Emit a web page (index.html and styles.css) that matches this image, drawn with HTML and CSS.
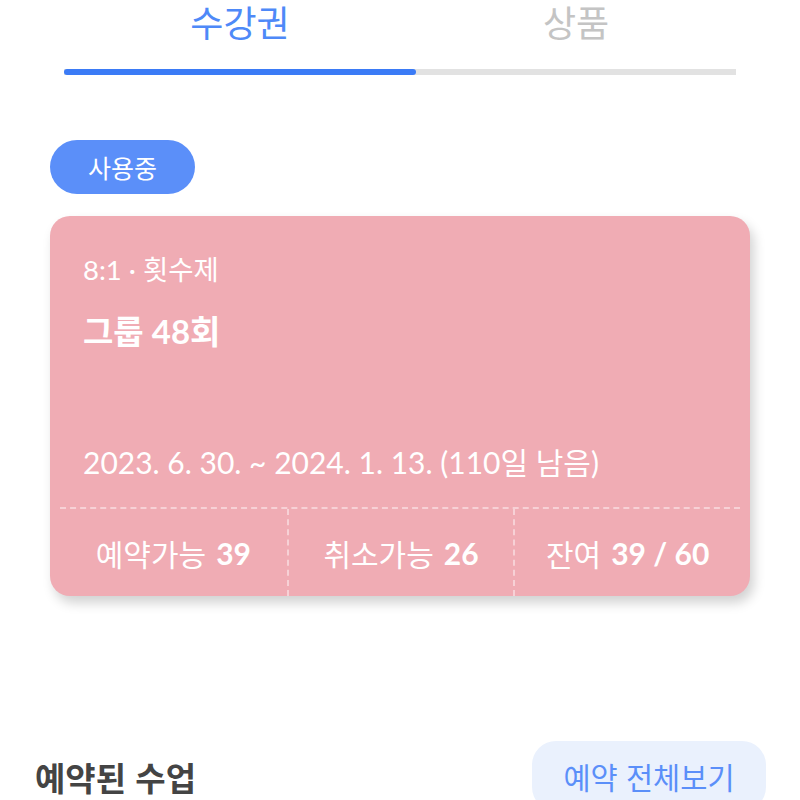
FILE: index.html
```html
<!DOCTYPE html>
<html lang="ko">
<head>
<meta charset="utf-8">
<link rel="stylesheet" href="styles.css">
</head>
<body>
<div class="page">
  <div class="tabs">
    <div class="tab active">수강권</div>
    <div class="tab">상품</div>
  </div>
  <div class="bar"><div class="bar-fill"></div></div>

  <div class="badge">사용중</div>

  <div class="card">
    <div class="card-info">
      <div class="card-meta">8:1 · 횟수제</div>
      <div class="card-title">그룹 48회</div>
      <div class="card-date">2023. 6. 30. ~ 2024. 1. 13. (110일 남음)</div>
    </div>
    <div class="stats">
      <div class="stat">예약가능 <b>39</b></div>
      <div class="stat">취소가능 <b>26</b></div>
      <div class="stat">잔여 <b>39 / 60</b></div>
    </div>
  </div>

  <div class="section-head">
    <div class="section-title">예약된 수업</div>
    <div class="section-btn">예약 전체보기</div>
  </div>
</div>
</body>
</html>
```

FILE: styles.css
```css
* { box-sizing: border-box; }
html, body { margin: 0; padding: 0; background: #ffffff; }
body {
  font-family: "Lato", "Noto Sans CJK KR", sans-serif;
  overflow: hidden;
}
.page { width: 800px; height: 800px; }

.tabs {
  display: grid;
  grid-template-columns: 352px 320px;
  margin: 0 64px;
  height: 69px;
}
.tab {
  text-align: center;
  font-size: 36px;
  line-height: 42px;
  color: #c4c4c4;
  font-family: "Noto Sans CJK KR", sans-serif;
}
.tab.active { color: #4e89f8; }

.bar {
  margin: 0 64px;
  height: 6px;
  background: #e2e2e2;
}
.bar-fill {
  width: 352px;
  height: 6px;
  background: #3b7bf6;
  border-radius: 3px;
}

.badge {
  margin: 65px 0 0 50px;
  width: 145px;
  height: 54px;
  border-radius: 27px;
  background: #5b8ff9;
  color: #ffffff;
  font-size: 25px;
  display: flex;
  align-items: center;
  justify-content: center;
}

.card {
  margin: 22px 0 0 50px;
  width: 700px;
  height: 380px;
  background: #f0acb4;
  border-radius: 20px;
  box-shadow: 4px 7px 12px rgba(0, 0, 0, 0.18);
  display: flex;
  flex-direction: column;
  color: #ffffff;
}
.card-info {
  flex: 1;
  padding: 36px 33px 0;
  display: flex;
  flex-direction: column;
}
.card-meta { font-size: 27.5px; line-height: 36px; }
.card-title { font-size: 33px; font-weight: 700; line-height: 40px; margin-top: 23px; }
.card-date { font-size: 30px; line-height: 36px; margin-top: auto; margin-bottom: 27px; }

.stats {
  margin: 0 10px;
  height: 89px;
  border-top: 2px dashed rgba(255, 255, 255, 0.45);
  display: grid;
  grid-template-columns: repeat(3, 1fr);
}
.stat {
  display: flex;
  align-items: center;
  justify-content: center;
  font-size: 30px;
}
.stat + .stat { border-left: 2px dashed rgba(255, 255, 255, 0.45); }
.stat b { font-weight: 700; margin-left: 10px; }

.section-head {
  margin: 145px 34px 0 35px;
  display: flex;
  justify-content: space-between;
  align-items: flex-start;
}
.section-title {
  margin-top: 12px;
  font-size: 33px;
  font-weight: 700;
  color: #444444;
  font-family: "Noto Sans CJK KR", sans-serif;
}
.section-btn {
  width: 234px;
  height: 70px;
  border-radius: 24px;
  background: #eaf1fd;
  color: #5b8ff9;
  font-size: 29.5px;
  font-family: "Noto Sans CJK KR", sans-serif;
  display: flex;
  align-items: center;
  justify-content: center;
}
```
